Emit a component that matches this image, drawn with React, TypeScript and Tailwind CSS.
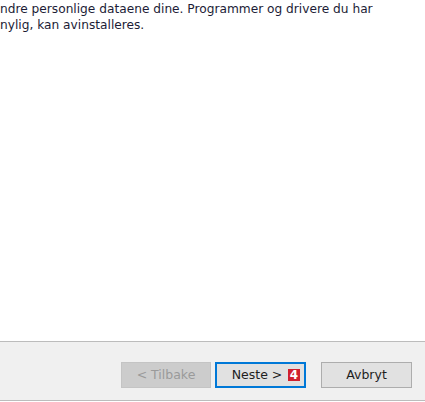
export default function App() {
  return (
    <div
      className="w-[425px] h-[402px] bg-white flex flex-col overflow-hidden"
      style={{ fontFamily: '"DejaVu Sans", Verdana, sans-serif' }}
    >
      {/* Description text, cropped at the left edge */}
      <div className="h-[341px] shrink-0">
        <p className="text-[12.2px] leading-[16px] text-[#1c1c36] mt-[1px]">
          ndre personlige dataene dine. Programmer og drivere du har
          <br />
          nylig, kan avinstalleres.
        </p>
      </div>

      {/* Wizard footer */}
      <div className="h-[60px] shrink-0 bg-[#f0f0f0] border-y border-[#bcbcbc] flex items-start justify-end pt-[20px] pr-[13px]">
        <button
          disabled
          className="w-[90px] h-[26px] bg-[#cccccc] border border-[#c4c4c4] text-[12.5px] text-[#9a9a9a]"
        >
          &lt; Tilbake
        </button>
        <button className="relative ml-[4px] w-[91px] h-[26px] bg-[#e1e1e1] border-2 border-[#0078d7] text-[12.5px] text-[#1e1e1e] pr-[7px]">
          Neste &gt;
          <span className="absolute left-[71px] top-[5px] w-[12px] h-[12px] bg-[#d0202e] text-white text-[12px] font-bold leading-[12px] flex items-center justify-center">
            4
          </span>
        </button>
        <button className="ml-[15px] w-[91px] h-[26px] bg-[#e1e1e1] border border-[#adadad] text-[12.5px] text-[#1e1e1e]">
          Avbryt
        </button>
      </div>
    </div>
  );
}
